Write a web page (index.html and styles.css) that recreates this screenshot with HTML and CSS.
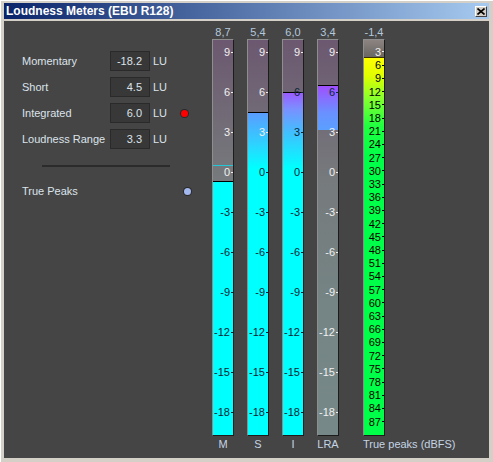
FILE: index.html
```html
<!DOCTYPE html>
<html lang="en">
<head>
    <meta charset="UTF-8">
    <title>Loudness Meters (EBU R128)</title>
    <link rel="stylesheet" href="styles.css">
</head>
<body>
    <div class="window">
        <div class="titlebar">
            <span class="title">Loudness Meters (EBU R128)</span>
            <span class="close-btn">
                <svg width="8" height="7" viewBox="0 0 8 7"><path d="M0.5 0.5 L7.5 6.5 M7.5 0.5 L0.5 6.5" stroke="#000" stroke-width="1.6"/></svg>
            </span>
        </div>

        <div class="content">
            <div class="panel">
                <div class="row">
                    <span class="name">Momentary</span>
                    <span class="value">-18.2</span>
                    <span class="unit">LU</span>
                </div>
                <div class="row">
                    <span class="name">Short</span>
                    <span class="value">4.5</span>
                    <span class="unit">LU</span>
                </div>
                <div class="row">
                    <span class="name">Integrated</span>
                    <span class="value">6.0</span>
                    <span class="unit">LU</span>
                    <span class="led red"></span>
                </div>
                <div class="row">
                    <span class="name">Loudness Range</span>
                    <span class="value">3.3</span>
                    <span class="unit">LU</span>
                </div>
                <div class="rule"></div>
                <div class="row tp-row">
                    <span class="name">True Peaks</span>
                    <span class="led blue"></span>
                </div>
            </div>

            <div class="meters">
                <!-- Momentary -->
                <div class="col">
                    <div class="peakval">8,7</div>
                    <div class="meter">
                        <div class="empty"></div>
                        <div class="hold"></div>
                        <div class="fill fill-m" style="height: 254px"></div>
                        <div class="scale">
                            <span class="tick">9</span><span class="tick">6</span><span class="tick">3</span><span class="tick">0</span>
                            <span class="tick dark">-3</span><span class="tick dark">-6</span><span class="tick dark">-9</span>
                            <span class="tick dark">-12</span><span class="tick dark">-15</span><span class="tick dark">-18</span>
                        </div>
                    </div>
                    <div class="caption">M</div>
                </div>

                <!-- Short -->
                <div class="col">
                    <div class="peakval">5,4</div>
                    <div class="meter">
                        <div class="empty"></div>
                        <div class="fill fill-s" style="height: 323px"></div>
                        <div class="scale">
                            <span class="tick">9</span><span class="tick">6</span><span class="tick">3</span><span class="tick dark">0</span>
                            <span class="tick dark">-3</span><span class="tick dark">-6</span><span class="tick dark">-9</span>
                            <span class="tick dark">-12</span><span class="tick dark">-15</span><span class="tick dark">-18</span>
                        </div>
                    </div>
                    <div class="caption">S</div>
                </div>

                <!-- Integrated -->
                <div class="col">
                    <div class="peakval">6,0</div>
                    <div class="meter">
                        <div class="empty"></div>
                        <div class="fill fill-i" style="height: 343px"></div>
                        <div class="scale">
                            <span class="tick">9</span><span class="tick dark">6</span><span class="tick dark">3</span><span class="tick dark">0</span>
                            <span class="tick dark">-3</span><span class="tick dark">-6</span><span class="tick dark">-9</span>
                            <span class="tick dark">-12</span><span class="tick dark">-15</span><span class="tick dark">-18</span>
                        </div>
                    </div>
                    <div class="caption">I</div>
                </div>

                <!-- Loudness range -->
                <div class="col">
                    <div class="peakval">3,4</div>
                    <div class="meter">
                        <div class="empty"></div>
                        <div class="fill fill-lra" style="height: 45px"></div>
                        <div style="height: 305px"></div>
                        <div class="scale">
                            <span class="tick">9</span><span class="tick dark">6</span><span class="tick">3</span><span class="tick">0</span>
                            <span class="tick">-3</span><span class="tick">-6</span><span class="tick">-9</span>
                            <span class="tick">-12</span><span class="tick">-15</span><span class="tick">-18</span>
                        </div>
                    </div>
                    <div class="caption">LRA</div>
                </div>

                <!-- True peaks -->
                <div class="col tp-col">
                    <div class="peakval">-1,4</div>
                    <div class="meter">
                        <div class="empty tp-empty"></div>
                        <div class="fill fill-tp" style="height: 378px"></div>
                        <div class="scale tp-scale">
                            <span class="tick">3</span>
                            <span class="tick black">6</span><span class="tick black">9</span><span class="tick black">12</span>
                            <span class="tick black">15</span><span class="tick black">18</span><span class="tick black">21</span>
                            <span class="tick black">24</span><span class="tick black">27</span><span class="tick black">30</span>
                            <span class="tick black">33</span><span class="tick black">36</span><span class="tick black">39</span>
                            <span class="tick black">42</span><span class="tick black">45</span><span class="tick black">48</span>
                            <span class="tick black">51</span><span class="tick black">54</span><span class="tick black">57</span>
                            <span class="tick black">60</span><span class="tick black">63</span><span class="tick black">66</span>
                            <span class="tick black">69</span><span class="tick black">72</span><span class="tick black">75</span>
                            <span class="tick black">78</span><span class="tick black">81</span><span class="tick black">84</span>
                            <span class="tick black">87</span>
                        </div>
                    </div>
                    <div class="caption tp-caption">True peaks (dBFS)</div>
                </div>
            </div>
        </div>
    </div>
</body>
</html>
```

FILE: styles.css
```css
* {
    margin: 0;
    padding: 0;
    box-sizing: border-box;
    font-family: 'Liberation Sans', Arial, sans-serif;
}

body {
    background: #d4d0c8;
}

/* Window frame */
.window {
    width: 493px;
    height: 462px;
    background: #d4d0c8;
    padding: 3px 4px 4px 4px;
    box-shadow: inset 1px 1px 0 #ffffff;
    display: flex;
    flex-direction: column;
}

.titlebar {
    height: 16px;
    margin-bottom: 2px;
    background: linear-gradient(to right, #0a246a, #a6caf0);
    display: flex;
    justify-content: space-between;
    align-items: center;
    padding: 0 2px 0 2px;
}

.title {
    color: #ffffff;
    font-size: 12px;
    font-weight: bold;
}

.close-btn {
    width: 12px;
    height: 11px;
    background: #d4d0c8;
    border: 1px solid;
    border-color: #ffffff #404040 #404040 #ffffff;
    display: flex;
    justify-content: center;
    align-items: center;
}

.content {
    flex: 1;
    background: #454545;
    display: flex;
    font-size: 11px;
}

/* Left readouts */
.panel {
    width: 208px;
    padding: 30px 0 0 18px;
    display: flex;
    flex-direction: column;
}

.row {
    height: 20px;
    margin-bottom: 6px;
    display: flex;
    align-items: center;
    color: #dce3ea;
}

.name {
    width: 88px;
}

.value {
    width: 40px;
    height: 20px;
    line-height: 18px;
    background: #383838;
    border: 1px solid #2a2a2a;
    text-align: right;
    padding-right: 7px;
}

.unit {
    width: 31px;
    padding-left: 3px;
}

.led {
    width: 7px;
    height: 7px;
    border-radius: 50%;
    box-shadow: 0 0 0 1px #2a2a2a;
}

.led.red {
    background: #ff0000;
}

.led.blue {
    background: #a4b8f0;
}

.tp-row {
    margin-top: 14px;
}

.tp-row .name {
    width: 162px;
}

.rule {
    width: 128px;
    height: 2px;
    margin: 10px 0 0 20px;
    background: #2b2b2b;
}

/* Meters */
.meters {
    display: flex;
    gap: 13px;
    padding-top: 4px;
}

.col {
    width: 22px;
    display: flex;
    flex-direction: column;
    align-items: center;
}

.tp-col {
    margin-left: 11px;
}

.peakval {
    height: 14px;
    line-height: 14px;
    color: #b4c8dc;
    white-space: nowrap;
}

.caption {
    margin-top: 1px;
    line-height: 14px;
    color: #c4d4e4;
    white-space: nowrap;
}

.tp-caption {
    align-self: flex-start;
}

.meter {
    position: relative;
    width: 22px;
    height: 397px;
    border: 1px solid;
    border-color: #8e8e8e #1c1c1c #1c1c1c #8e8e8e;
    background: linear-gradient(#6c5870 0%, #767a7c 35%, #758585 70%, #778888 100%);
    display: flex;
    flex-direction: column;
    overflow: hidden;
}

.empty {
    flex: 1;
}

.tp-empty {
    background: linear-gradient(#8c8480, #6a6662);
}

.hold {
    height: 1px;
    margin-bottom: 15px;
    background: #22c8d8;
}

.fill {
    border-top: 1px solid #000000;
}

.fill-m {
    background: #00ffff;
}

.fill-s {
    background: linear-gradient(#5a9cff 0px, #30d0ff 30px, #00ffff 55px);
}

.fill-i {
    background: linear-gradient(#9a5cff 0px, #7a90ff 16px, #40c0ff 40px, #00ffff 75px);
}

.fill-lra {
    background: linear-gradient(#a050ff, #6a90ff 60%, #5aa0ff);
}

.fill-tp {
    border-top-color: #3a3000;
    background: linear-gradient(#ffff00 0px, #e0ff00 18px, #80ff30 42px, #20ff40 68px, #00ff48 100px);
}

/* Scale labels drawn over the bar */
.scale {
    position: absolute;
    top: -8px;
    left: 0;
    right: 0;
    display: flex;
    flex-direction: column;
}

.tick {
    height: 40px;
    display: flex;
    align-items: center;
    justify-content: flex-end;
    color: #f0f0f0;
    font-size: 11px;
}

.tick::after {
    content: '';
    width: 2px;
    height: 1px;
    margin-left: 1px;
    background: currentColor;
}

.tick.dark {
    color: #0c2634;
}

.tick.black {
    color: #000000;
}

.tp-scale {
    top: 5.4px;
}

.tp-scale .tick {
    height: 13.214px;
}
```
